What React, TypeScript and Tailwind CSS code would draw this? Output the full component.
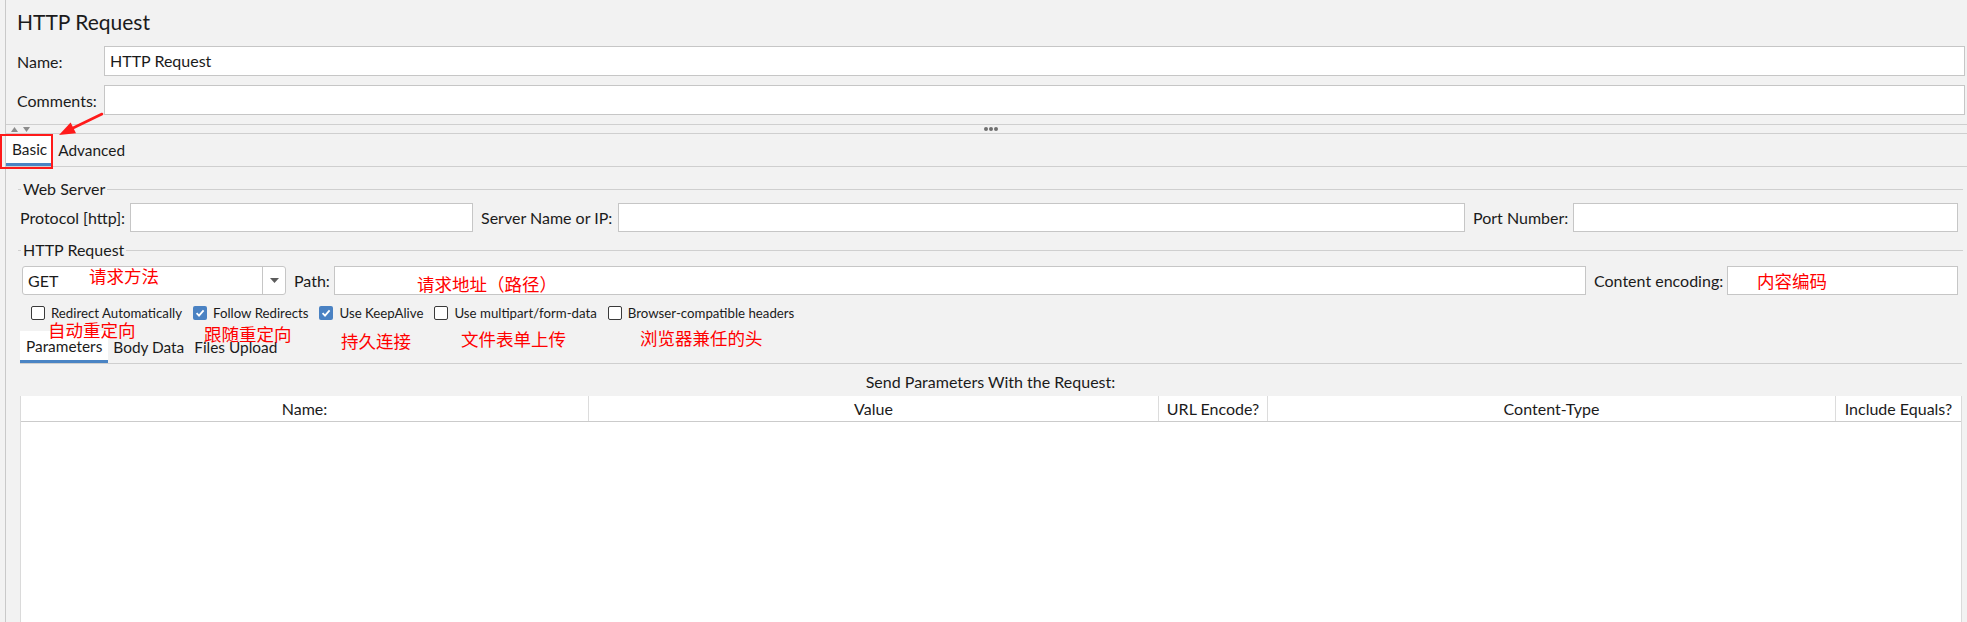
import type { ReactNode } from "react";

const Field = ({ className = "", children }: { className?: string; children?: ReactNode }) => (
  <div className={"h-full bg-white border border-[#c6c6c6] flex items-center px-[5px] " + className}>
    {children}
  </div>
);

const Titled = ({ title }: { title: string }) => (
  <div className="flex items-center h-[22px]">
    <span className="w-[3px] h-px bg-[#cfcfcf]" />
    <span className="px-[2px] text-[16px] leading-none">{title}</span>
    <span className="flex-1 h-px bg-[#cfcfcf]" />
  </div>
);

const Check = ({ label, checked }: { label: string; checked?: boolean }) => (
  <div className="flex items-center gap-[6px]">
    {checked ? (
      <span className="w-[14px] h-[14px] rounded-[2px] bg-[#4a82c3] flex items-center justify-center">
        <svg width="10" height="10" viewBox="0 0 10 10">
          <path d="M1.6 5.2 L4 7.6 L8.6 2.4" fill="none" stroke="white" strokeWidth="1.8" />
        </svg>
      </span>
    ) : (
      <span className="w-[14px] h-[14px] rounded-[2px] border border-[#3a3a3a] bg-white" />
    )}
    <span className="text-[13.25px] pt-[1px]">{label}</span>
  </div>
);

// 빨간 주석 (스크린샷 위에 쓴 설명)
const notes = [
  { t: "请求方法", x: 89, y: 276 },
  { t: "请求地址（路径）", x: 417, y: 284 },
  { t: "内容编码", x: 1757, y: 281 },
  { t: "自动重定向", x: 48, y: 330 },
  { t: "跟随重定向", x: 204, y: 334 },
  { t: "持久连接", x: 341, y: 341 },
  { t: "文件表单上传", x: 461, y: 339 },
  { t: "浏览器兼任的头", x: 640, y: 338 },
];

const columns = ["Name:", "Value", "URL Encode?", "Content-Type", "Include Equals?"];

export default function App() {
  return (
    <div className="relative w-[1967px] h-[622px] overflow-hidden bg-[#f2f2f2] text-[#1b1b1b] font-['Lato','Noto_Sans',sans-serif]">
      <div className="ml-[5px] h-full border-l border-[#c9c9c9] flex flex-col">
        {/* title */}
        <div className="h-[44px] flex items-center pl-[11px] text-[21px]">HTTP Request</div>

        {/* name / comments */}
        <div className="mt-[2px] flex flex-col gap-[9px] pl-[11px] pr-[2px]">
          <div className="h-[30px] flex items-center">
            <span className="w-[87px] text-[16px] pt-[2px]">Name:</span>
            <Field className="flex-1 text-[16px]">HTTP Request</Field>
          </div>
          <div className="h-[30px] flex items-center">
            <span className="w-[87px] text-[16px] pt-[2px]">Comments:</span>
            <Field className="flex-1" />
          </div>
        </div>

        {/* splitter */}
        <div className="relative mt-[9px] h-[10px] border-y border-[#cfcfcf] flex items-center pl-[5px] gap-[5px]">
          <svg width="7" height="5" viewBox="0 0 7 5">
            <path d="M0 5 L3.5 0 L7 5 Z" fill="#8c8c8c" />
          </svg>
          <svg width="7" height="5" viewBox="0 0 7 5">
            <path d="M0 0 L7 0 L3.5 5 Z" fill="#8c8c8c" />
          </svg>
          <div className="absolute left-[978px] top-[2px] flex gap-[1.5px]">
            <span className="w-[3.5px] h-[3.5px] rounded-full bg-[#707070]" />
            <span className="w-[3.5px] h-[3.5px] rounded-full bg-[#707070]" />
            <span className="w-[3.5px] h-[3.5px] rounded-full bg-[#707070]" />
          </div>
        </div>

        {/* main tabs */}
        <div className="h-[33px] border-b border-[#cfcfcf] flex text-[15.4px]">
          <div className="h-full px-[6px] flex items-center bg-white border-b-[3px] border-[#4a84c4] pt-[3px]">Basic</div>
          <div className="h-full pl-[5px] pr-[6px] flex items-center pt-[1px]">Advanced</div>
        </div>

        {/* basic panel */}
        <div className="flex-1 flex flex-col ml-[12px] mr-[4px] pt-[11px] min-h-0">
          <Titled title="Web Server" />
          <div className="mt-[3px] h-[29px] flex pl-[2px] pr-[5px] text-[16px]">
            <span className="w-[110px] flex items-center">Protocol [http]:</span>
            <Field className="w-[343px]" />
            <span className="w-[145px] pl-[8px] flex items-center">Server Name or IP:</span>
            <Field className="flex-1" />
            <span className="w-[108px] pl-[8px] flex items-center">Port Number:</span>
            <Field className="w-[385px]" />
          </div>

          <div className="mt-[7px]">
            <Titled title="HTTP Request" />
          </div>
          <div className="mt-[5px] h-[29px] flex pl-[4px] pr-[5px] text-[16px]">
            <div className="w-[264px] h-full bg-white border border-[#c6c6c6] rounded-[3px] flex">
              <span className="flex-1 flex items-center pl-[5px]">GET</span>
              <span className="w-[23px] border-l border-[#c6c6c6] flex items-center justify-center">
                <svg width="9" height="5" viewBox="0 0 9 5">
                  <path d="M0 0 L9 0 L4.5 5 Z" fill="#5c5c5c" />
                </svg>
              </span>
            </div>
            <span className="w-[48px] pl-[8px] flex items-center">Path:</span>
            <Field className="flex-1" />
            <span className="w-[141px] pl-[8px] flex items-center">Content encoding:</span>
            <Field className="w-[231px]" />
          </div>

          <div className="mt-[10px] h-[16px] flex items-center gap-[11px] pl-[13px]">
            <Check label="Redirect Automatically" />
            <Check label="Follow Redirects" checked />
            <Check label="Use KeepAlive" checked />
            <Check label="Use multipart/form-data" />
            <Check label="Browser-compatible headers" />
          </div>

          {/* sub tabs */}
          <div className="mt-[10px] h-[33px] border-b border-[#cfcfcf] ml-[2px] mr-[1px] flex text-[15.4px]">
            <div className="h-full px-[6px] flex items-center bg-white border-b-[3px] border-[#4a84c4] pt-[3px]">Parameters</div>
            <div className="h-full px-[5px] flex items-center pt-[1px]">Body Data</div>
            <div className="h-full px-[5px] flex items-center pt-[1px]">Files Upload</div>
          </div>

          <div className="h-[32px] flex items-center justify-center pt-[4px] text-[16px]">
            Send Parameters With the Request:
          </div>

          {/* table */}
          <div className="flex-1 ml-[2px] mr-[1px] bg-white border-x border-[#dadada] flex flex-col">
            <div className="h-[26px] grid grid-cols-[568px_570px_109px_568px_1fr] border-b border-[#cbcbcb] text-[16px]">
              {columns.map((c, i) => (
                <div
                  key={c}
                  className={
                    i < columns.length - 1
                      ? "flex items-center justify-center border-r border-[#dcdcdc]"
                      : "flex items-center justify-center"
                  }
                >
                  {c}
                </div>
              ))}
            </div>
            <div className="flex-1" />
          </div>
        </div>
      </div>

      {/* annotations */}
      <div className="absolute left-0 top-[134px] w-[53px] h-[35px] border-2 border-[#ff1a1a]" />
      <svg className="absolute left-[50px] top-[105px]" width="60" height="40" viewBox="50 105 60 40">
        <line x1="102" y1="114" x2="72" y2="128.5" stroke="#ff1a1a" strokeWidth="2.6" strokeLinecap="round" />
        <path d="M59 135 L70.6 122.4 L76 133.2 Z" fill="#ff1a1a" />
      </svg>
      {notes.map((n) => (
        <span
          key={n.t}
          className="absolute text-[17.5px] leading-[18px] text-[#ff0000] font-['Noto_Sans_CJK_SC',sans-serif] whitespace-nowrap"
          style={{ left: n.x, top: n.y - 9 }}
        >
          {n.t}
        </span>
      ))}
    </div>
  );
}
